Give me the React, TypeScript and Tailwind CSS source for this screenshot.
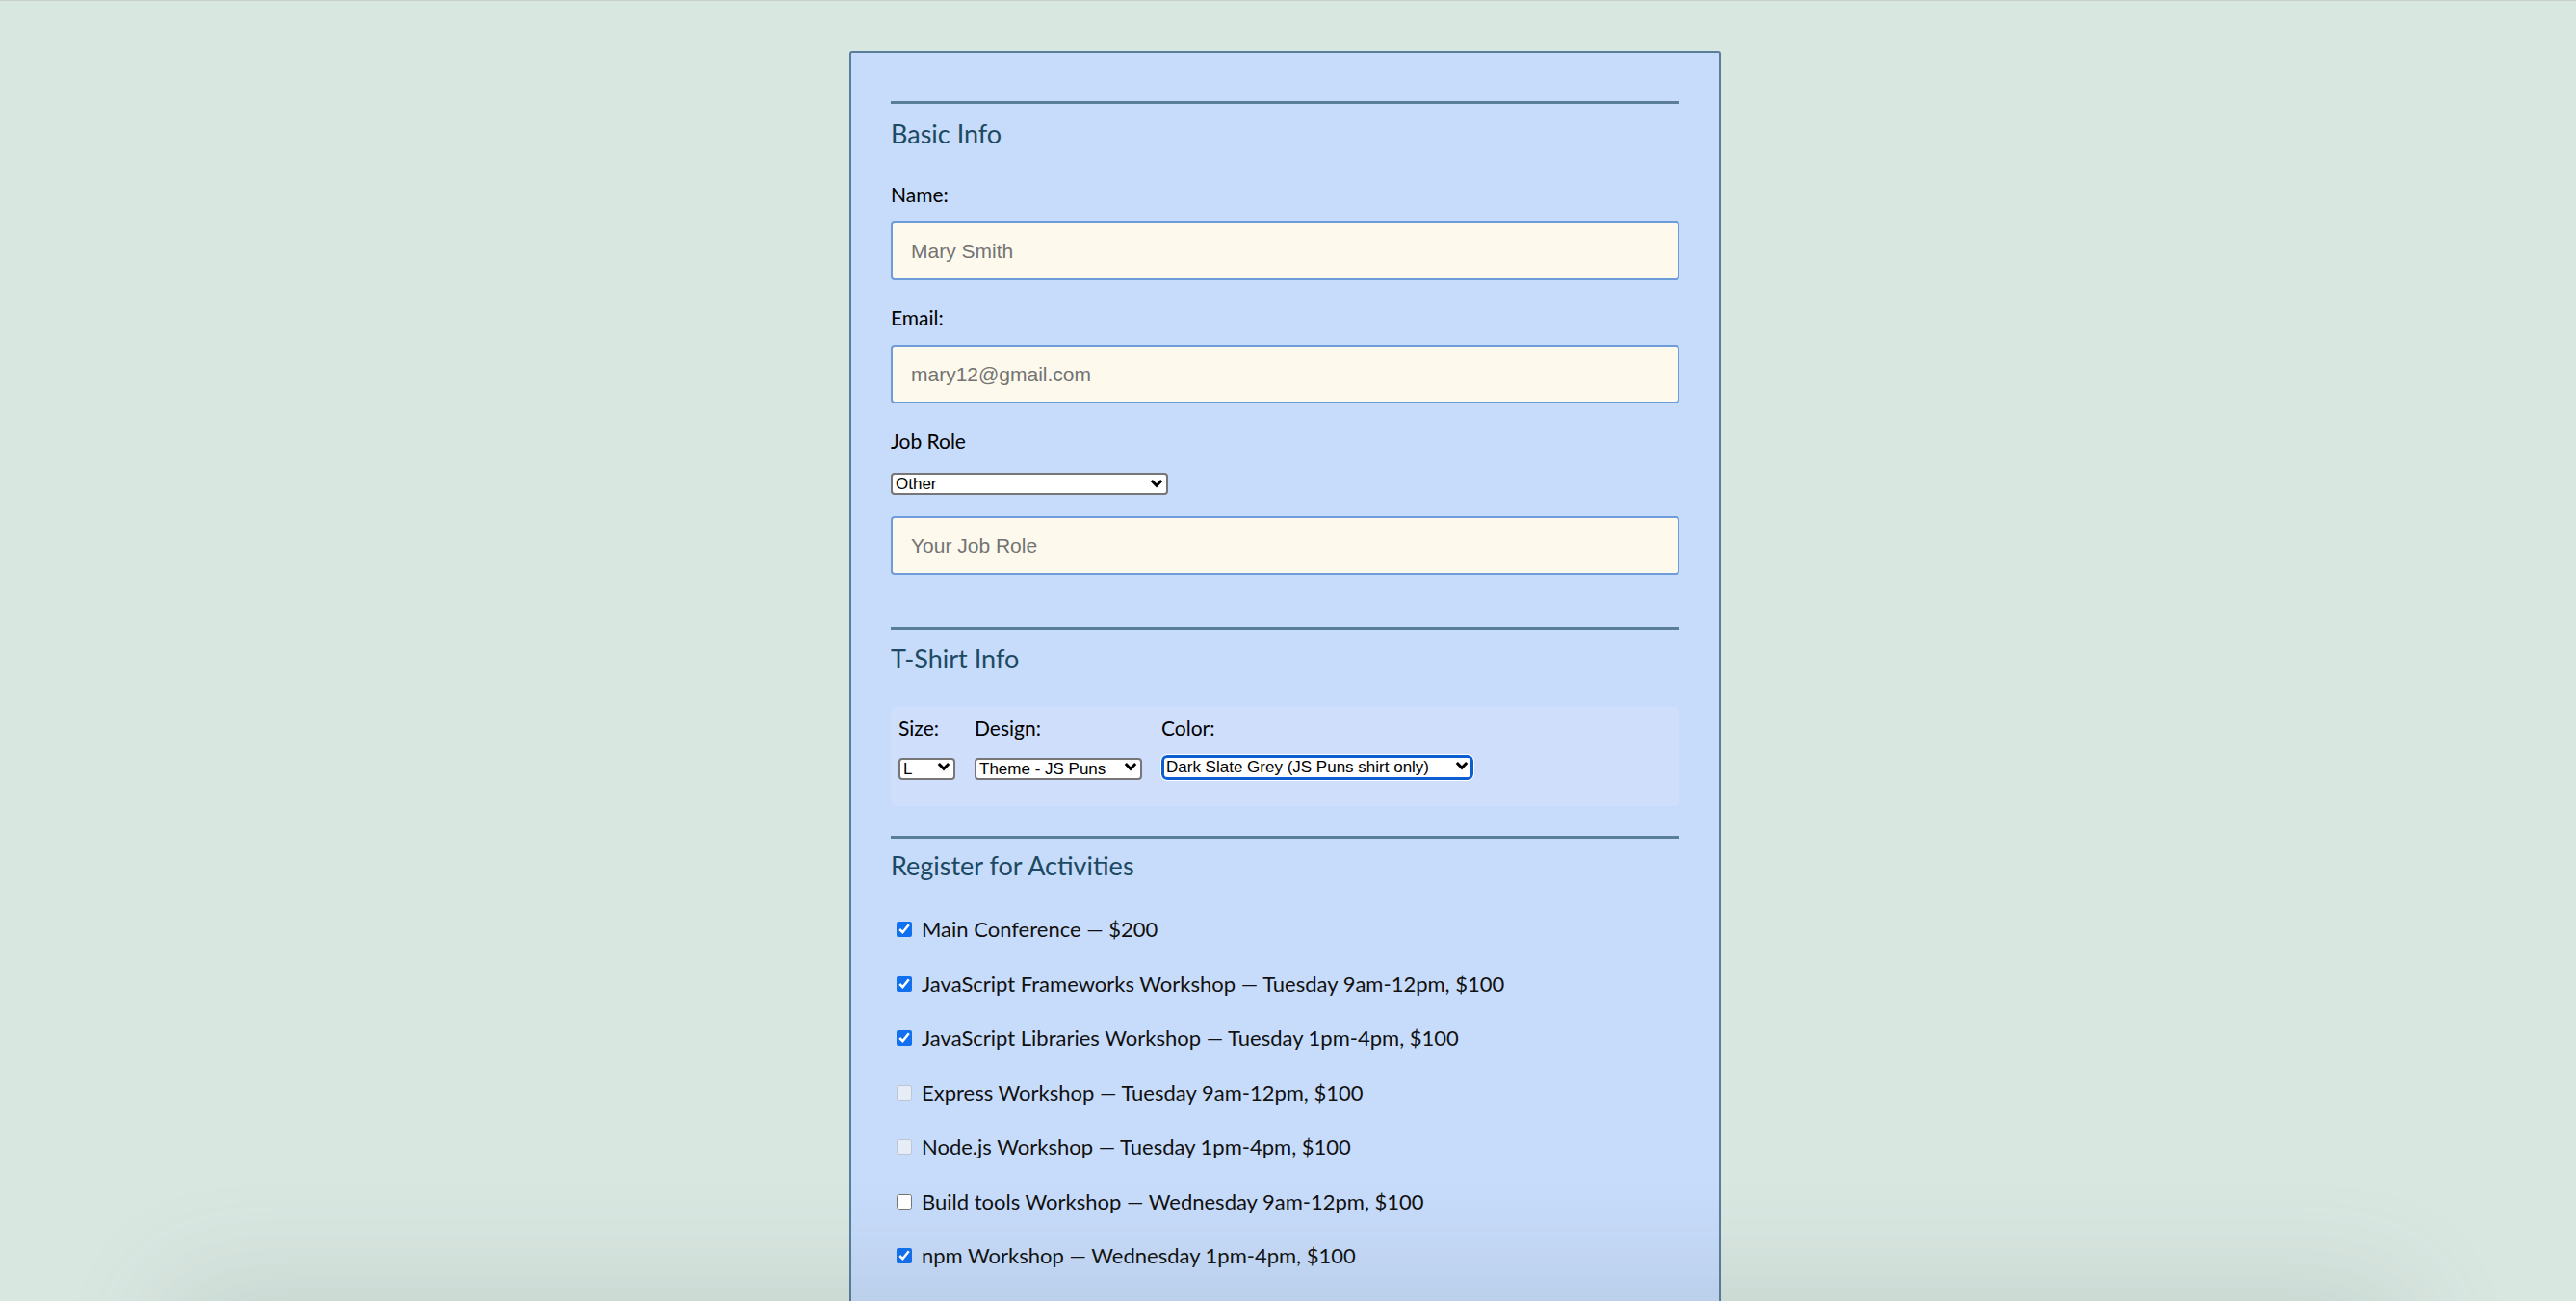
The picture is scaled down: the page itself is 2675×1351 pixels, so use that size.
import { useState } from "react";

const activities = [
  { label: "Main Conference — $200", checked: true, disabled: false },
  { label: "JavaScript Frameworks Workshop — Tuesday 9am-12pm, $100", checked: true, disabled: false },
  { label: "JavaScript Libraries Workshop — Tuesday 1pm-4pm, $100", checked: true, disabled: false },
  { label: "Express Workshop — Tuesday 9am-12pm, $100", checked: false, disabled: true },
  { label: "Node.js Workshop — Tuesday 1pm-4pm, $100", checked: false, disabled: true },
  { label: "Build tools Workshop — Wednesday 9am-12pm, $100", checked: false, disabled: false },
  { label: "npm Workshop — Wednesday 1pm-4pm, $100", checked: true, disabled: false },
];

const Chevron = () => (
  <svg
    className="pointer-events-none absolute right-[5px] top-1/2 -translate-y-1/2"
    width="14"
    height="10"
    viewBox="0 0 14 10"
  >
    <path d="M1.8 2 L7 7.4 L12.2 2" fill="none" stroke="#000" strokeWidth="3" />
  </svg>
);

type SelectProps = {
  value: string;
  options: string[];
  className: string;
  focused?: boolean;
};

const Select = ({ value, options, className, focused }: SelectProps) => {
  const [v, setV] = useState(value);
  return (
    <div className={`relative ${className}`}>
      <select
        value={v}
        onChange={(e) => setV(e.target.value)}
        className={
          focused
            ? "appearance-none w-full h-[26px] bg-white rounded-[6px] border-[3px] border-[#0b5fd3] outline outline-1 outline-white pl-[2px] text-[17px] leading-[20px] text-black font-['Liberation_Sans',Arial,sans-serif]"
            : "appearance-none w-full h-[23px] bg-white rounded-[4px] border-2 border-[#767676] pl-[3px] text-[17px] leading-[19px] text-black font-['Liberation_Sans',Arial,sans-serif]"
        }
      >
        {options.map((o) => (
          <option key={o}>{o}</option>
        ))}
      </select>
      <Chevron />
    </div>
  );
};

const Heading = ({ children }: { children: string }) => (
  <h2 className="text-[27px] leading-[32px] text-[#1c4a62] font-['Lato',sans-serif]">{children}</h2>
);

const Rule = ({ className }: { className: string }) => (
  <div className={`h-[3px] bg-[#5a7d99] ${className}`}></div>
);

const TextInput = ({ placeholder, className }: { placeholder: string; className: string }) => (
  <input
    type="text"
    placeholder={placeholder}
    className={`block w-full h-[61px] rounded-[4px] border-2 border-[#6e9cda] bg-[#fdf9ec] px-[19px] text-[21px] text-black placeholder:text-[#737373] font-['Liberation_Sans',Arial,sans-serif] ${className}`}
  />
);

const App = () => {
  return (
    <div className="relative h-screen overflow-hidden bg-[#d9e7e1] border-t border-[#c9cfcc] font-['Lato',sans-serif] pr-[6px]">
      <form className="w-[905px] mx-auto mt-[52px] border-2 border-[#5a7d99] rounded-[3px] bg-[#c7dbfa] px-[41px] pt-[50px] pb-[60px]">
        {/* Basic Info */}
        <Rule className="" />
        <div className="mt-[15px]">
          <Heading>Basic Info</Heading>
        </div>
        <label className="block mt-[33px] text-[21px] leading-[28px] text-black">Name:</label>
        <TextInput placeholder="Mary Smith" className="mt-[14px]" />
        <label className="block mt-[25px] text-[21px] leading-[28px] text-black">Email:</label>
        <TextInput placeholder="mary12@gmail.com" className="mt-[14px]" />
        <label className="block mt-[25px] text-[21px] leading-[28px] text-black">Job Role</label>
        <Select
          value="Other"
          options={["Full Stack JavaScript Developer", "Front End Developer", "Back End Developer", "Student", "Other"]}
          className="mt-[18px] w-[288px]"
        />
        <TextInput placeholder="Your Job Role" className="mt-[22px]" />

        {/* T-Shirt Info */}
        <Rule className="mt-[54px]" />
        <div className="mt-[14px]">
          <Heading>T-Shirt Info</Heading>
        </div>
        <div className="mt-[34px] rounded-[6px] bg-[#cfdffb] pl-[8px] pt-[8px] pb-[27px] flex gap-[20px] text-[21px] leading-[28px] text-black">
          <div className="flex flex-col">
            <span>Size:</span>
            <Select value="L" options={["S", "M", "L", "XL"]} className="mt-[12px] w-[59px]" />
          </div>
          <div className="flex flex-col">
            <span>Design:</span>
            <Select
              value="Theme - JS Puns"
              options={["Theme - JS Puns", "Theme - I ♥ JS"]}
              className="mt-[12px] w-[174px]"
            />
          </div>
          <div className="flex flex-col">
            <span>Color:</span>
            <Select
              value="Dark Slate Grey (JS Puns shirt only)"
              options={["Cornflower Blue (JS Puns shirt only)", "Dark Slate Grey (JS Puns shirt only)", "Gold (JS Puns shirt only)"]}
              className="mt-[10px] w-[324px]"
              focused
            />
          </div>
        </div>

        {/* Activities */}
        <Rule className="mt-[31px]" />
        <div className="mt-[12px]">
          <Heading>Register for Activities</Heading>
        </div>
        <div className="mt-[36px] flex flex-col gap-[28.5px]">
          {activities.map((a) => (
            <label key={a.label} className="flex items-center h-[28px] text-[22px] leading-[28px] text-[#111]">
              <input
                type="checkbox"
                defaultChecked={a.checked}
                disabled={a.disabled}
                className="w-[16px] h-[16px] ml-[6px] mr-[10px] accent-[#1170f0]"
              />
              {a.label}
            </label>
          ))}
        </div>
      </form>
      {/* bottom shadow overlay */}
      <div className="pointer-events-none absolute left-[230px] right-[230px] top-[1390px] h-[300px] shadow-[0_0_110px_50px_rgba(70,100,90,0.16)]"></div>
    </div>
  );
};

export default App;
